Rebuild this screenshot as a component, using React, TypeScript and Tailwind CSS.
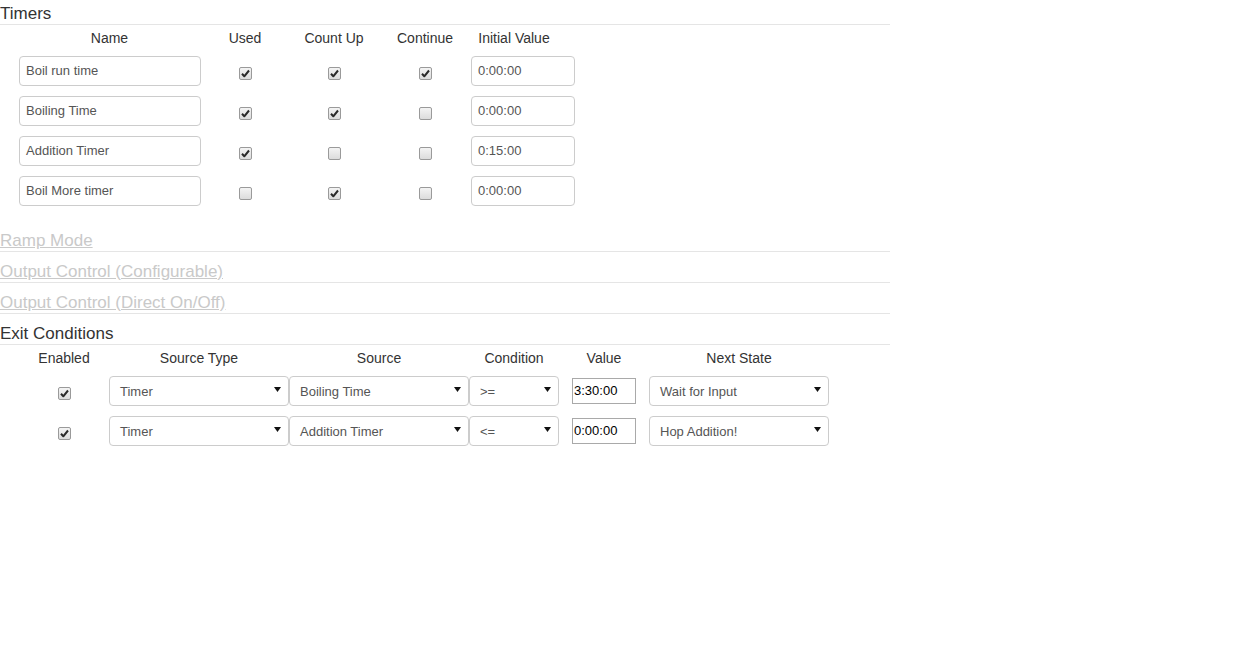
import React from "react";

function Check({ checked }: { checked: boolean }) {
  return (
    <span className="inline-flex h-[13px] w-[13px] items-center justify-center rounded-[2px] border border-[#9a9a9a] bg-gradient-to-b from-[#f4f4f4] to-[#dcdcdc]">
      {checked && (
        <svg width="9" height="9" viewBox="0 0 9 9">
          <path d="M1 4.8 L3.3 7.3 L8 1.5" fill="none" stroke="#2a2a2a" strokeWidth="2" strokeLinejoin="round" />
        </svg>
      )}
    </span>
  );
}

function Heading({ children, muted, className }: { children: React.ReactNode; muted?: boolean; className?: string }) {
  return (
    <div className={`h-[21px] border-b border-[#e5e5e5] text-[17px] leading-[20px] ${className ?? ""}`}>
      {muted ? <a className="text-[#c9c9c9] underline">{children}</a> : <span className="text-[#333]">{children}</span>}
    </div>
  );
}

function Select({ value, w }: { value: string; w: string }) {
  return (
    <div className={`relative h-[30px] ${w} rounded-[4px] border border-[#cccccc] bg-white`}>
      <div className="pl-[10px] pt-[1px] text-[13px] leading-[28px] text-[#555]">{value}</div>
      <svg className="absolute right-[7px] top-[10px]" width="7" height="5" viewBox="0 0 7 5">
        <path d="M0 0 L7 0 L3.5 5 Z" fill="#111" />
      </svg>
    </div>
  );
}

const timers = [
  { name: "Boil run time", used: true, up: true, cont: true, init: "0:00:00" },
  { name: "Boiling Time", used: true, up: true, cont: false, init: "0:00:00" },
  { name: "Addition Timer", used: true, up: false, cont: false, init: "0:15:00" },
  { name: "Boil More timer", used: false, up: true, cont: false, init: "0:00:00" },
];

const exits = [
  { src: "Boiling Time", cond: ">=", val: "3:30:00", next: "Wait for Input" },
  { src: "Addition Timer", cond: "<=", val: "0:00:00", next: "Hop Addition!" },
];

export default function App() {
  return (
    <div className="min-h-[659px] w-[1256px] bg-white font-['Liberation_Sans',Arial,sans-serif] text-[14px] text-[#333]">
      <div className="w-[890px] pt-[4px]">
        <Heading>Timers</Heading>

        <div className="mt-[3px] flex h-[20px] items-center leading-[20px]">
          <div className="w-[219px] text-center">Name</div>
          <div className="w-[52px] text-center">Used</div>
          <div className="w-[126px] text-center">Count Up</div>
          <div className="w-[56px] text-center">Continue</div>
          <div className="w-[122px] text-center">Initial Value</div>
        </div>

        <div className="mt-[8px] flex flex-col gap-[10px]">
          {timers.map((t) => (
            <div key={t.name} className="flex h-[30px] items-center">
              <div className="w-[219px] pl-[19px]">
                <div className="h-[30px] w-[182px] rounded-[4px] border border-[#cccccc] pl-[6px] text-[13px] leading-[28px] text-[#555]">{t.name}</div>
              </div>
              <div className="flex w-[52px] justify-center pt-[5px]"><Check checked={t.used} /></div>
              <div className="flex w-[126px] justify-center pt-[5px]"><Check checked={t.up} /></div>
              <div className="flex w-[56px] justify-center pt-[5px]"><Check checked={t.cont} /></div>
              <div className="w-[122px] pl-[18px]">
                <div className="h-[30px] w-[104px] rounded-[4px] border border-[#cccccc] pl-[6px] text-[13px] leading-[28px] text-[#555]">{t.init}</div>
              </div>
            </div>
          ))}
        </div>

        <Heading muted className="mt-[25px]">Ramp Mode</Heading>
        <Heading muted className="mt-[10px]">Output Control (Configurable)</Heading>
        <Heading muted className="mt-[10px]">Output Control (Direct On/Off)</Heading>
        <Heading className="mt-[10px]">Exit Conditions</Heading>

        <div className="mt-[3px] flex h-[20px] items-center leading-[20px]">
          <div className="w-[109px] pl-[19px] text-center">Enabled</div>
          <div className="w-[180px] text-center">Source Type</div>
          <div className="w-[180px] text-center">Source</div>
          <div className="w-[90px] text-center">Condition</div>
          <div className="w-[90px] text-center">Value</div>
          <div className="w-[180px] text-center">Next State</div>
        </div>

        <div className="mt-[8px] flex flex-col gap-[10px]">
          {exits.map((e) => (
            <div key={e.src} className="flex h-[30px] items-center">
              <div className="flex w-[109px] justify-center pl-[19px] pt-[5px]"><Check checked /></div>
              <Select value="Timer" w="w-[180px]" />
              <Select value={e.src} w="w-[180px]" />
              <Select value={e.cond} w="w-[90px]" />
              <div className="flex w-[90px] justify-center">
                <div className="h-[26px] w-[64px] border border-[#a9a9a9] pl-[1px] text-[13px] leading-[24px] text-black">{e.val}</div>
              </div>
              <Select value={e.next} w="w-[180px]" />
            </div>
          ))}
        </div>
      </div>
    </div>
  );
}
